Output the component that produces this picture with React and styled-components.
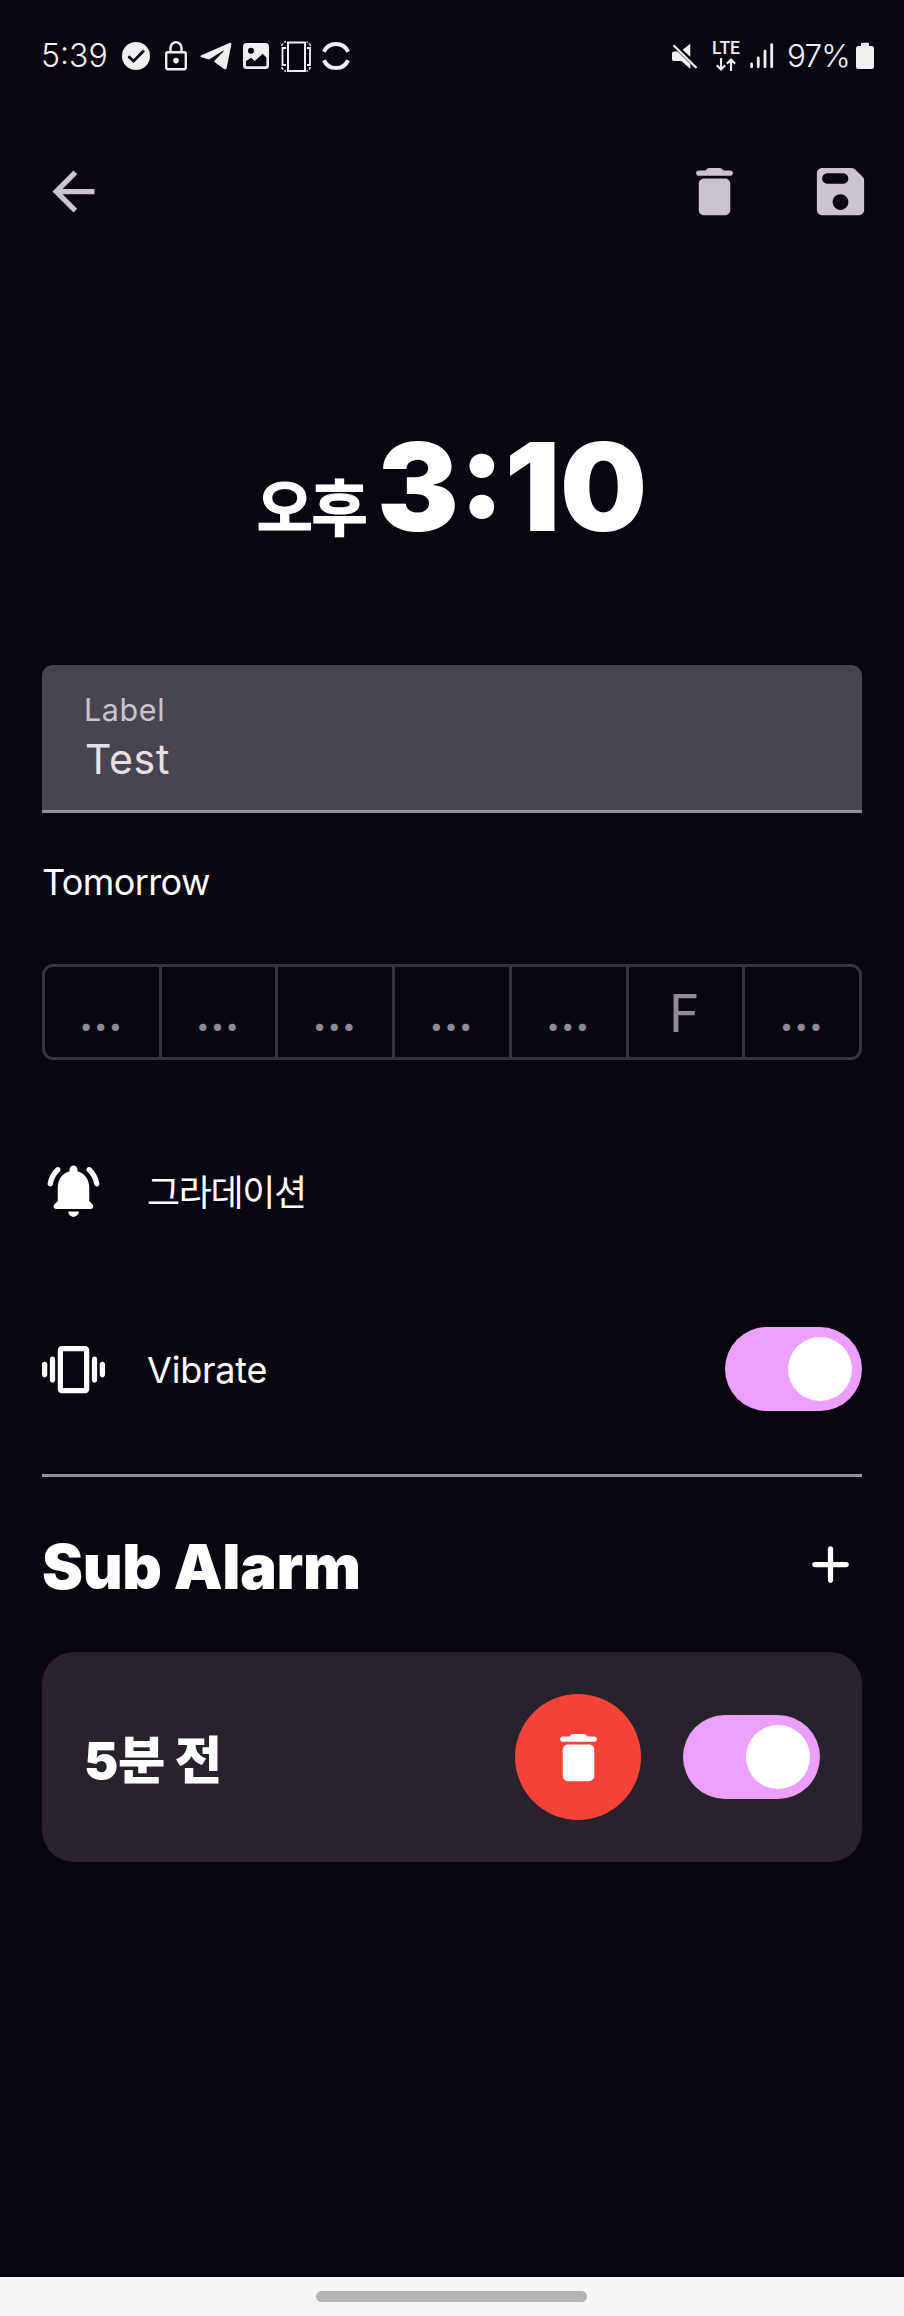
import React, { useState } from 'react';
import styled, { createGlobalStyle } from 'styled-components';

const GlobalStyle = createGlobalStyle`
  * {
    box-sizing: border-box;
  }

  body {
    margin: 0;
    background: #090610;
    font-family: Inter, 'Noto Sans CJK KR', sans-serif;
  }

  button {
    border: none;
    padding: 0;
    background: none;
    font-family: inherit;
  }
`;

const Screen = styled.div`
  display: flex;
  flex-direction: column;
  width: 904px;
  height: 2316px;
  background: #090610;
  color: #fff;
`;

const StatusBar = styled.header`
  display: flex;
  justify-content: space-between;
  height: 118px;
  padding: 0 30px 6px 41px;
  color: #efeff0;
`;

const StatusGroup = styled.div`
  display: flex;
  align-items: center;
`;

const StatusText = styled.span`
  width: ${({ $width }) => $width}px;
  margin-left: ${({ $gap }) => $gap || 0}px;
  font-size: ${({ $size }) => $size || 31.5}px;
  font-weight: 350;
  line-height: 40px;
  letter-spacing: ${({ $tracking }) => $tracking || 0}px;
  white-space: nowrap;
`;

const StatusIcon = styled.svg`
  display: block;
  flex: none;
  margin-left: ${({ $gap }) => $gap}px;
`;

const Network = styled.div`
  display: flex;
  flex-direction: column;
  align-items: center;
  gap: 3px;
  width: 28px;
  margin-left: 14px;
`;

const NetworkName = styled.span`
  font-family: Roboto, sans-serif;
  font-size: 17.5px;
  font-weight: 500;
  line-height: 14px;
`;

const AppBar = styled.nav`
  display: flex;
  align-items: center;
  height: 147px;
  padding: 0 1px 1px 10px;
`;

const IconButton = styled.button`
  display: flex;
  align-items: center;
  justify-content: center;
  width: 126px;
  height: 126px;
  color: #cac4d0;
`;

const Spacer = styled.div`
  flex: 1;
`;

const Content = styled.main`
  display: flex;
  flex: 1;
  flex-direction: column;
  padding: 0 42px;
`;

const Time = styled.h1`
  display: flex;
  align-items: baseline;
  justify-content: center;
  height: 400px;
  margin: 0;
  padding-top: 142px;
`;

const Meridiem = styled.span`
  margin-right: 11px;
  font-size: 61px;
  font-weight: 700;
  line-height: 80px;
  letter-spacing: -1.5px;
  -webkit-text-stroke: 1.2px currentColor;
`;

/* no letter-spacing here, it would drop the raised colon between digits */
const Digits = styled.span`
  font-size: 122.5px;
  font-weight: 900;
  line-height: 160px;
`;

const Field = styled.label`
  display: flex;
  flex-direction: column;
  height: 148px;
  padding: 24px 42px 0;
  border-bottom: 3px solid #938f99;
  border-radius: 11px 11px 0 0;
  background: #49454f;
`;

const FieldLabel = styled.span`
  color: #cac4d0;
  font-size: 30.5px;
  line-height: 42px;
  letter-spacing: 0.6px;
`;

const FieldInput = styled.input`
  width: 100%;
  height: 56px;
  border: none;
  padding: 0 0 0 1px;
  outline: none;
  background: none;
  color: #e6e1e5;
  font-family: inherit;
  font-size: 41px;
  letter-spacing: 0.7px;
`;

const NextRing = styled.p`
  margin: 44px 0 57px;
  font-size: 36px;
  line-height: 50px;
  letter-spacing: -0.6px;
`;

const Days = styled.div`
  display: flex;
  height: 96px;
  border: 3px solid #36333a;
  border-radius: 11px;
`;

const Day = styled.button`
  flex: 1;
  padding: 3px 2px 0 0;
  color: #8f8a95;
  font-size: 52px;
  font-weight: ${({ $clipped }) => ($clipped ? 600 : 400)};
  line-height: 84px;
  letter-spacing: 0;

  & + & {
    border-left: 3px solid #36333a;
  }
`;

const Ellipsis = styled.span`
  font-size: 46px;
`;

const Setting = styled.div`
  display: flex;
  align-items: center;
  gap: 42px;
  height: ${({ $height }) => $height}px;
  margin-top: ${({ $top }) => $top}px;
`;

const SettingName = styled.span`
  flex: 1;
  padding-top: ${({ $drop }) => $drop}px;
  font-size: 36px;
  line-height: 50px;
  letter-spacing: ${({ $tracking }) => $tracking || 0}px;
`;

const Track = styled.button`
  display: flex;
  align-items: center;
  justify-content: ${({ $on }) => ($on ? 'flex-end' : 'flex-start')};
  width: 137px;
  height: 84px;
  padding: 0 10px;
  border-radius: 42px;
  background: ${({ $on }) => ($on ? '#eb9fff' : '#49454f')};
`;

const Thumb = styled.span`
  width: 64px;
  height: 64px;
  border-radius: 50%;
  background: #fff;
`;

const Divider = styled.hr`
  width: 100%;
  height: 3px;
  margin: 63px 0 0;
  border: none;
  background: #938f99;
`;

const SectionHeader = styled.div`
  display: flex;
  align-items: center;
  justify-content: space-between;
  height: 175px;
`;

const SectionTitle = styled.h2`
  margin: 5px 0 0;
  font-size: 61.5px;
  font-weight: 900;
  line-height: 80px;
  letter-spacing: -0.3px;
`;

const SubAlarm = styled.div`
  display: flex;
  align-items: center;
  gap: 42px;
  height: 210px;
  padding: 0 42px;
  border-radius: 32px;
  background: #28222c;
`;

const SubAlarmTime = styled.span`
  flex: 1;
  padding-top: 5px;
  font-size: 51.5px;
  font-weight: 900;
  line-height: 70px;
  letter-spacing: -0.4px;
`;

const DeleteButton = styled(IconButton)`
  border-radius: 50%;
  background: #f44336;
  color: #fff;
`;

const GestureBar = styled.footer`
  display: flex;
  justify-content: center;
  height: 39px;
  padding: 14px 1px 0 0;
  background: #f5f5f5;
`;

const GestureHandle = styled.div`
  width: 271px;
  height: 11px;
  border-radius: 6px;
  background: #b4b4b4;
`;

const paths = {
  back: 'M20 11H7.83l5.59-5.59L12 4l-8 8 8 8 1.41-1.41L7.83 13H20v-2z',
  trash:
    'M6 19c0 1.1.9 2 2 2h8c1.1 0 2-.9 2-2V9c0-1.1-.9-2-2-2H8c-1.1 0-2 .9-2 2v10zM18 4h-2.5l-.71-.71c-.18-.18-.44-.29-.7-.29H9.91c-.26 0-.52.11-.7.29L8.5 4H6c-.55 0-1 .45-1 1s.45 1 1 1h12c.55 0 1-.45 1-1s-.45-1-1-1z',
  save:
    'M17.59 3.59c-.38-.38-.89-.59-1.42-.59H5c-1.11 0-2 .9-2 2v14c0 1.1.9 2 2 2h14c1.1 0 2-.9 2-2V7.83c0-.53-.21-1.04-.59-1.41l-2.82-2.83zM12 19c-1.66 0-3-1.34-3-3s1.34-3 3-3 3 1.34 3 3-1.34 3-3 3zm1-10H7c-1.1 0-2-.9-2-2s.9-2 2-2h6c1.1 0 2 .9 2 2s-.9 2-2 2z',
  bell:
    'M12 22c1.1 0 2-.9 2-2h-4c0 1.1.9 2 2 2zm6-6v-5c0-3.07-1.63-5.64-4.5-6.32V4c0-.83-.67-1.5-1.5-1.5s-1.5.67-1.5 1.5v.68C7.64 5.36 6 7.92 6 11v5l-1.29 1.29c-.63.63-.19 1.71.7 1.71h13.17c.89 0 1.34-1.08.71-1.71L18 16zM6.77 4.73c.42-.38.43-1.03.03-1.43-.38-.38-1-.39-1.39-.02C3.7 4.84 2.52 6.96 2.14 9.34c-.09.61.38 1.16 1 1.16.48 0 .9-.35.98-.83.3-1.94 1.26-3.67 2.65-4.94zM18.6 3.28c-.4-.37-1.02-.36-1.4.02-.4.4-.38 1.04.03 1.42 1.38 1.27 2.35 3 2.65 4.94.07.48.49.83.98.83.61 0 1.09-.55.99-1.16-.38-2.37-1.55-4.48-3.25-6.05z',
  vibrate:
    'M1 15c.55 0 1-.45 1-1v-4c0-.55-.45-1-1-1s-1 .45-1 1v4c0 .55.45 1 1 1zm3 2c.55 0 1-.45 1-1V8c0-.55-.45-1-1-1s-1 .45-1 1v8c0 .55.45 1 1 1zm18-7v4c0 .55.45 1 1 1s1-.45 1-1v-4c0-.55-.45-1-1-1s-1 .45-1 1zm-2 7c.55 0 1-.45 1-1V8c0-.55-.45-1-1-1s-1 .45-1 1v8c0 .55.45 1 1 1zM16.5 3h-9C6.67 3 6 3.67 6 4.5v15c0 .83.67 1.5 1.5 1.5h9c.83 0 1.5-.67 1.5-1.5v-15c0-.83-.67-1.5-1.5-1.5zM16 19H8V5h8v14z',
  plus:
    'M18 13h-5v5c0 .55-.45 1-1 1s-1-.45-1-1v-5H6c-.55 0-1-.45-1-1s.45-1 1-1h5V6c0-.55.45-1 1-1s1 .45 1 1v5h5c.55 0 1 .45 1 1s-.45 1-1 1z',
};

function Icon({ name }) {
  return (
    <svg width="63" height="63" viewBox="0 0 24 24" fill="currentColor" aria-hidden>
      <path d={paths[name]} />
    </svg>
  );
}

function Switch({ on, onToggle, label }) {
  return (
    <Track role="switch" aria-checked={on} aria-label={label} $on={on} onClick={onToggle}>
      <Thumb />
    </Track>
  );
}

function PhoneStatus() {
  return (
    <StatusBar>
      <StatusGroup>
        <StatusText $width={66} $size={32}>5:39</StatusText>
        <StatusIcon $gap={15} width="28" height="28" viewBox="0 0 28 28">
          <circle cx="14" cy="14" r="14" fill="currentColor" />
          <path d="M6.5 14.2l5 5L22 8.5" fill="none" stroke="#090610" strokeWidth="2.7" />
        </StatusIcon>
        <StatusIcon $gap={15} width="22" height="30" viewBox="0 0 22 30" fill="none" stroke="currentColor" strokeWidth="2.4">
          <rect x="1.2" y="11.2" width="19.6" height="17" rx="1.6" />
          <path d="M5.5 11V6.8a5.5 5.5 0 0 1 11 0V11" />
          <circle cx="11" cy="19.6" r="2.8" fill="currentColor" stroke="none" />
        </StatusIcon>
        <StatusIcon $gap={13} width="32" height="28" viewBox="0 0 32 28" fill="currentColor">
          <path d="M1.4 13.2 29.4.9c1.3-.5 2.2.2 1.9 1.8l-4.6 23c-.3 1.6-1.4 2-2.7 1.2l-9.2-6.6c-.8-.6-.7-1.1-.1-1.7L23.4 9.4c.6-.6 0-.9-.8-.4L9.8 17c-.7.4-1.3.4-2 .2l-6.2-1.9C.2 14.8.2 13.8 1.4 13.2z" />
        </StatusIcon>
        <StatusIcon $gap={11} width="26" height="26" viewBox="0 0 26 26">
          <rect width="26" height="26" rx="3.5" fill="currentColor" />
          <circle cx="8" cy="7.8" r="3" fill="#090610" />
          <path d="M2.9 18.3l5.1-3.6 3.7 3.2 8-7.1 3.7 3.6v7.4a1.5 1.5 0 0 1-1.5 1.5H4.4a1.5 1.5 0 0 1-1.5-1.5z" fill="#090610" />
        </StatusIcon>
        <StatusIcon $gap={12} width="30" height="31" viewBox="0 0 30 31" fill="none" stroke="currentColor">
          <rect x="7" y="1.5" width="17" height="28.5" strokeWidth="2" />
          <path d="M5 7H1.5V24H5M26 7h3V24h-3" strokeWidth="1.8" />
          <path d="M.6 5C1.5 2.5 3 1.3 5 .8M29.5 5C28.6 2.5 27.2 1.3 25.5.8M.6 26c.9 2.5 2.4 3.7 4.4 4.2M29.5 26c-.9 2.5-2.3 3.7-4 4.2" strokeWidth="1.4" strokeDasharray="3 1.5" />
        </StatusIcon>
        <StatusIcon $gap={11} width="28" height="28" viewBox="0 0 28 28" fill="none" stroke="currentColor" strokeWidth="4">
          <path d="M2 9.8C4 5 8.5 2 14 2s10 3 12 7.8M2 18.2C4 23 8.5 26 14 26s10-3 12-7.8" />
        </StatusIcon>
      </StatusGroup>

      <StatusGroup>
        <StatusIcon $gap={0} width="26" height="27" viewBox="0 0 26 27" fill="currentColor">
          <path d="M0 10.5C0 9.2.8 8.5 2 8.5h3.6L18.3 21v5L9.6 18H2c-1.2 0-2-.7-2-2zM10.6 6.7 18.3.7v13.2z" />
          <path d="M1.5 2.2 24.5 25" stroke="currentColor" strokeWidth="2.3" />
        </StatusIcon>
        <Network>
          <NetworkName>LTE</NetworkName>
          <svg width="20" height="13" viewBox="0 0 20 13" fill="none" stroke="currentColor" strokeWidth="2.1">
            <path d="M5 0v11.5M.8 7.2 5 11.4l4.2-4.2M15 13V1.5M10.8 5.8 15 1.6l4.2 4.2" />
          </svg>
        </Network>
        <StatusIcon $gap={10} width="24" height="26" viewBox="0 0 24 26" stroke="currentColor" strokeWidth="2.8" strokeLinecap="round">
          <path d="M1.6 21v2.8M8.3 15v8.8M15 8.2v15.6M21.7 1.7v22.1" />
        </StatusIcon>
        <StatusText $gap={13} $width={62} $tracking={-0.9}>97%</StatusText>
        <StatusIcon $gap={7} width="18" height="28" viewBox="0 0 18 28" fill="currentColor">
          <path d="M5 2.5C5 1 5.5.8 6.5.8h5c1 0 1.5.2 1.5 1.7V4h2.5A2.5 2.5 0 0 1 18 6.5v18a2.5 2.5 0 0 1-2.5 2.5h-13A2.5 2.5 0 0 1 0 24.5v-18A2.5 2.5 0 0 1 2.5 4H5z" />
        </StatusIcon>
      </StatusGroup>
    </StatusBar>
  );
}

const days = ['…', '…', '…', '…', '…', 'F', '…'];

export default function App() {
  const [label, setLabel] = useState('Test');
  const [vibrate, setVibrate] = useState(true);
  const [subAlarm, setSubAlarm] = useState(true);

  return (
    <Screen>
      <GlobalStyle />
      <PhoneStatus />
      <AppBar>
        <IconButton aria-label="Back"><Icon name="back" /></IconButton>
        <Spacer />
        <IconButton aria-label="Delete"><Icon name="trash" /></IconButton>
        <IconButton aria-label="Save"><Icon name="save" /></IconButton>
      </AppBar>

      <Content>
        <Time>
          <Meridiem>오후</Meridiem>
          <Digits>3:10</Digits>
        </Time>

        <Field>
          <FieldLabel>Label</FieldLabel>
          <FieldInput value={label} onChange={(e) => setLabel(e.target.value)} />
        </Field>
        <NextRing>Tomorrow</NextRing>
        <Days>
          {days.map((day, i) => (
            <Day key={i} $clipped={day === '…'}>
              {day === '…' ? <Ellipsis>{day}</Ellipsis> : day}
            </Day>
          ))}
        </Days>

        <Setting $height={84} $top={88}>
          <Icon name="bell" />
          <SettingName $tracking={-1.4} $drop={5}>그라데이션</SettingName>
        </Setting>
        <Setting $height={84} $top={95}>
          <Icon name="vibrate" />
          <SettingName $tracking={-0.2} $drop={2}>Vibrate</SettingName>
          <Switch label="Vibrate" on={vibrate} onToggle={() => setVibrate(!vibrate)} />
        </Setting>
        <Divider />

        <SectionHeader>
          <SectionTitle>Sub Alarm</SectionTitle>
          <Icon name="plus" />
        </SectionHeader>
        <SubAlarm>
          <SubAlarmTime>5분 전</SubAlarmTime>
          <DeleteButton aria-label="Delete sub alarm"><Icon name="trash" /></DeleteButton>
          <Switch label="Sub alarm" on={subAlarm} onToggle={() => setSubAlarm(!subAlarm)} />
        </SubAlarm>
      </Content>

      <GestureBar>
        <GestureHandle />
      </GestureBar>
    </Screen>
  );
}
